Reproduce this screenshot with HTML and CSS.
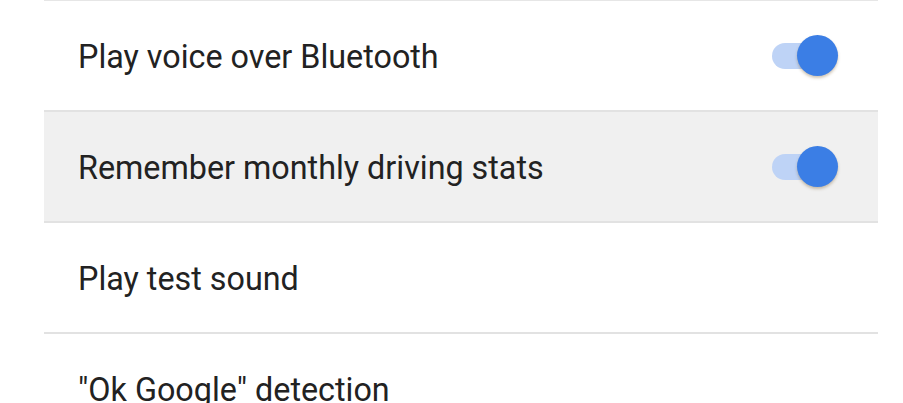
FILE: index.html
```html
<!DOCTYPE html>
<html>
<head>
<meta charset="utf-8">
<link rel="stylesheet" href="styles.css">
</head>
<body>
<div class="list">
  <div class="row">
    <span class="label">Play voice over Bluetooth</span>
    <span class="switch on"><span class="track"></span><span class="thumb"></span></span>
  </div>
  <div class="row pressed">
    <span class="label">Remember monthly driving stats</span>
    <span class="switch on"><span class="track"></span><span class="thumb"></span></span>
  </div>
  <div class="row">
    <span class="label">Play test sound</span>
  </div>
  <div class="row">
    <span class="label">"Ok Google" detection</span>
  </div>
</div>
</body>
</html>
```
FILE: styles.css
```css
html, body {
  margin: 0;
  padding: 0;
  background: #ffffff;
  overflow: hidden;
}
.list {
  margin: 0 25px 0 44px;
  border-top: 1px solid #e6e6e6;
}
.row {
  height: 109px;
  display: flex;
  align-items: center;
  justify-content: space-between;
  padding: 0 40px 0 34px;
  border-bottom: 2px solid #e2e2e2;
  font-family: Roboto, "Noto Sans", sans-serif;
}
.row.pressed {
  background: #f0f0f0;
}
.label {
  font-size: 34px;
  color: #222222;
  display: inline-block;
  transform-origin: left center;
  transform: scaleX(0.95);
  white-space: nowrap;
}
.switch {
  position: relative;
  width: 66px;
  height: 42px;
  display: inline-block;
}
.track {
  position: absolute;
  left: 0;
  top: 8px;
  width: 58px;
  height: 26px;
  border-radius: 13px;
  background: #bed3f6;
}
.thumb {
  position: absolute;
  right: 0;
  top: 0;
  width: 41px;
  height: 41px;
  border-radius: 50%;
  background: #3b7ee5;
  box-shadow: 0 2px 3px rgba(120, 90, 40, 0.35);
}
```
